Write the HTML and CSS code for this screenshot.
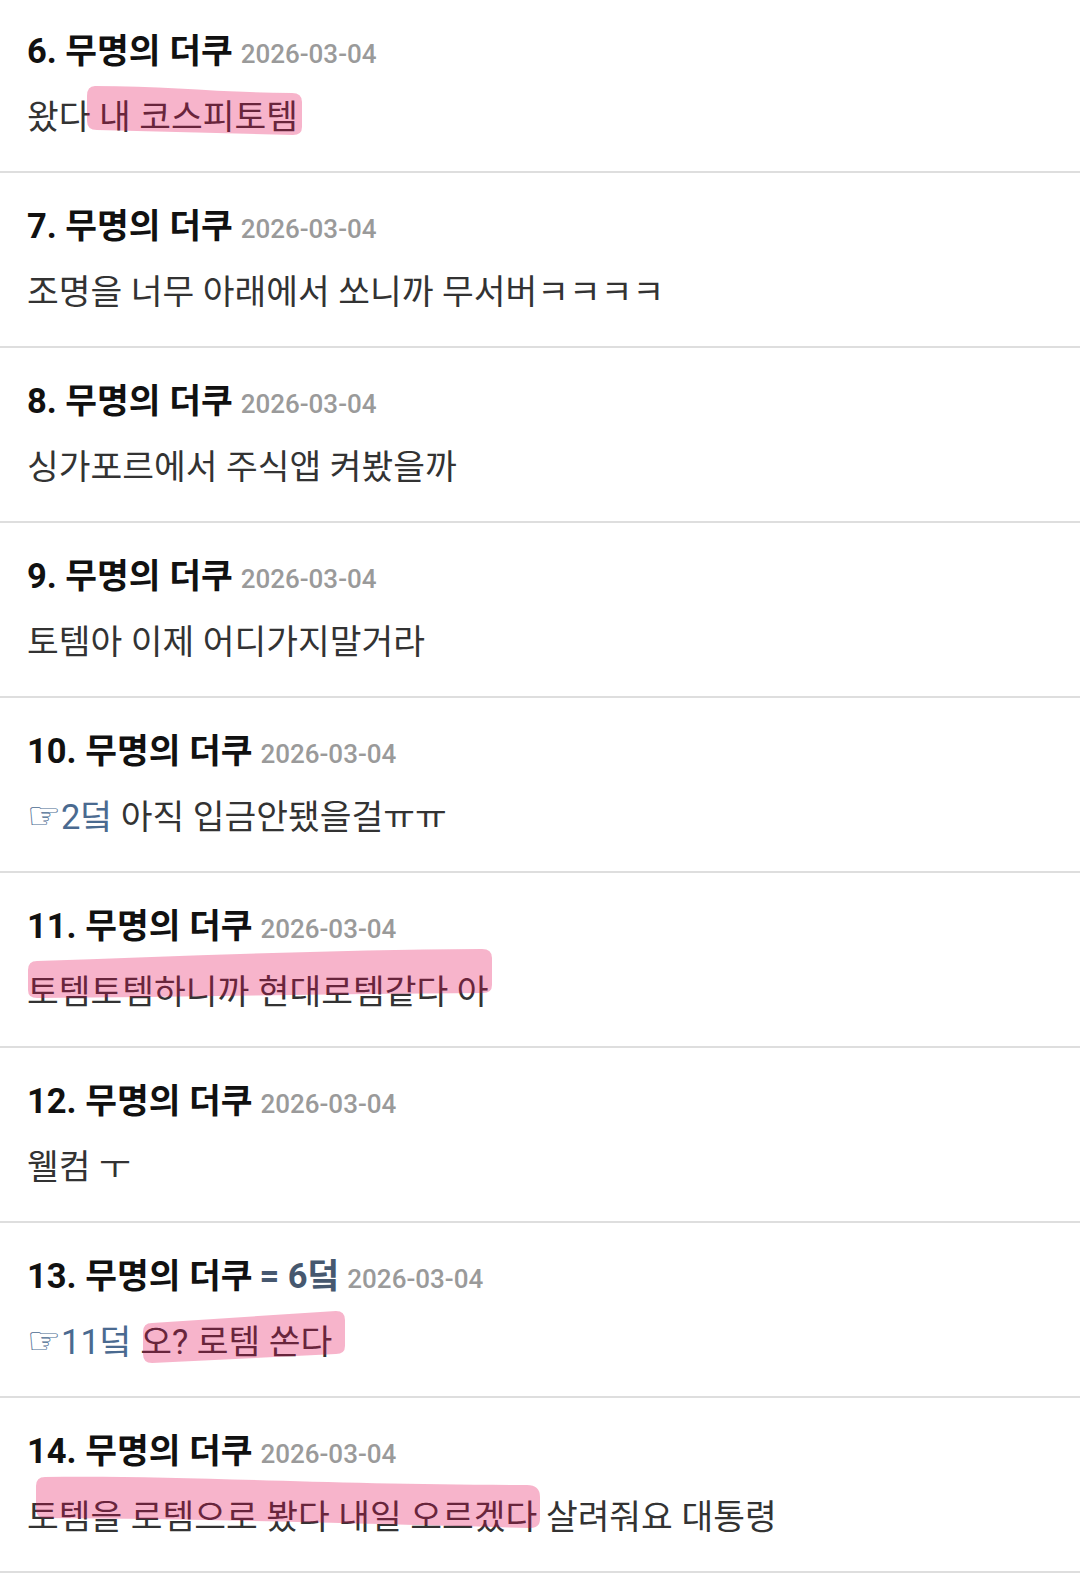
FILE: index.html
```html
<!DOCTYPE html>
<html lang="ko">
<head>
    <meta charset="UTF-8">
    <meta name="viewport" content="width=device-width, initial-scale=1.0">
    <title>댓글</title>
    <link rel="stylesheet" href="styles.css">
</head>
<body>
    <ul class="comments">
        <li class="comment">
            <div class="comment-head"><span class="author">6. 무명의 더쿠</span> <span class="date">2026-03-04</span></div>
            <div class="comment-body">
                왔다 내 코스피토템
                <svg class="marker" viewBox="0 0 560 60" width="560" height="60">
                    <path d="M 68 -8 C 140 -8 200 -1 265 -1 Q 275 -1 275 8 L 275 33 Q 275 41 266 41 L 70 36 Q 60 36 60 27 L 60 2 Q 60 -8 68 -8 Z"/>
                </svg>
            </div>
        </li>
        <li class="comment">
            <div class="comment-head"><span class="author">7. 무명의 더쿠</span> <span class="date">2026-03-04</span></div>
            <div class="comment-body">조명을 너무 아래에서 쏘니까 무서버ㅋㅋㅋㅋ</div>
        </li>
        <li class="comment">
            <div class="comment-head"><span class="author">8. 무명의 더쿠</span> <span class="date">2026-03-04</span></div>
            <div class="comment-body">싱가포르에서 주식앱 켜봤을까</div>
        </li>
        <li class="comment">
            <div class="comment-head"><span class="author">9. 무명의 더쿠</span> <span class="date">2026-03-04</span></div>
            <div class="comment-body">토템아 이제 어디가지말거라</div>
        </li>
        <li class="comment">
            <div class="comment-head"><span class="author">10. 무명의 더쿠</span> <span class="date">2026-03-04</span></div>
            <div class="comment-body"><a class="reply" href="#"><span class="hand">☞</span>2덬</a> 아직 입금안됐을걸ㅠㅠ</div>
        </li>
        <li class="comment">
            <div class="comment-head"><span class="author">11. 무명의 더쿠</span> <span class="date">2026-03-04</span></div>
            <div class="comment-body">
                토템토템하니까 현대로템같다 아
                <svg class="marker" viewBox="0 0 560 60" width="560" height="60">
                    <path d="M 10 -8 C 150 -13 300 -19 455 -20 Q 465 -20 465 -11 L 465 16 Q 465 24 456 24 C 300 25 150 28 10 29 Q 1 29 1 21 L 1 1 Q 1 -8 10 -8 Z"/>
                </svg>
            </div>
        </li>
        <li class="comment">
            <div class="comment-head"><span class="author">12. 무명의 더쿠</span> <span class="date">2026-03-04</span></div>
            <div class="comment-body">웰컴 ㅜ</div>
        </li>
        <li class="comment">
            <div class="comment-head"><span class="author">13. 무명의 더쿠</span> <span class="writer">= 6덬</span> <span class="date">2026-03-04</span></div>
            <div class="comment-body">
                <a class="reply" href="#"><span class="hand">☞</span>11덬</a> 오? 로템 쏜다
                <svg class="marker" viewBox="0 0 560 60" width="560" height="60">
                    <path d="M 125 4 L 309 -8 Q 318 -8 318 1 L 318 27 Q 318 35 309 35 L 125 44 Q 116 44 116 35 L 116 13 Q 116 4 125 4 Z"/>
                </svg>
            </div>
        </li>
        <li class="comment">
            <div class="comment-head"><span class="author">14. 무명의 더쿠</span> <span class="date">2026-03-04</span></div>
            <div class="comment-body">
                토템을 로템으로 봤다 내일 오르겠다 살려줘요 대통령
                <svg class="marker" viewBox="0 0 560 60" width="560" height="60">
                    <path d="M 18 -17 C 150 -19 300 -9 500 -9 Q 513 -9 513 3 L 513 25 Q 513 34 503 34 C 350 30 200 25 18 24 Q 9 24 9 15 L 9 -8 Q 9 -17 18 -17 Z"/>
                </svg>
            </div>
        </li>
    </ul>
</body>
</html>
```

FILE: styles.css
```css
body {
    margin: 0;
    background-color: #fff;
    font-family: Roboto, "Noto Sans CJK KR", sans-serif;
    overflow: hidden;
}

.comments {
    list-style: none;
    margin: -2px 0 0;
    padding: 0;
}

.comment {
    padding: 30px 27px 31px;
    border-bottom: 2px solid #dedede;
}

.comment-head {
    height: 46px;
    line-height: 46px;
    white-space: nowrap;
}

.author {
    font-size: 34.5px;
    font-weight: bold;
    color: #111;
}

.writer {
    font-size: 34.5px;
    font-weight: bold;
    color: #46586f;
    margin-left: 3px;
}

.date {
    font-size: 26px;
    font-weight: 500;
    color: #9a9a9a;
    margin-left: 4px;
}

.comment-body {
    position: relative;
    margin-top: 20px;
    height: 46px;
    line-height: 46px;
    font-size: 34.5px;
    color: #333;
    white-space: nowrap;
}

.reply {
    color: #4a6a90;
    text-decoration: none;
}

.hand {
    font-family: "DejaVu Sans", sans-serif;
    font-size: 38px;
    font-weight: bold;
    line-height: 1;
}

/* pink highlighter strokes drawn over the text */
.marker {
    position: absolute;
    left: 0;
    top: 0;
    overflow: visible;
    pointer-events: none;
}

.marker path {
    fill: rgba(228, 5, 82, 0.3);
}
```
